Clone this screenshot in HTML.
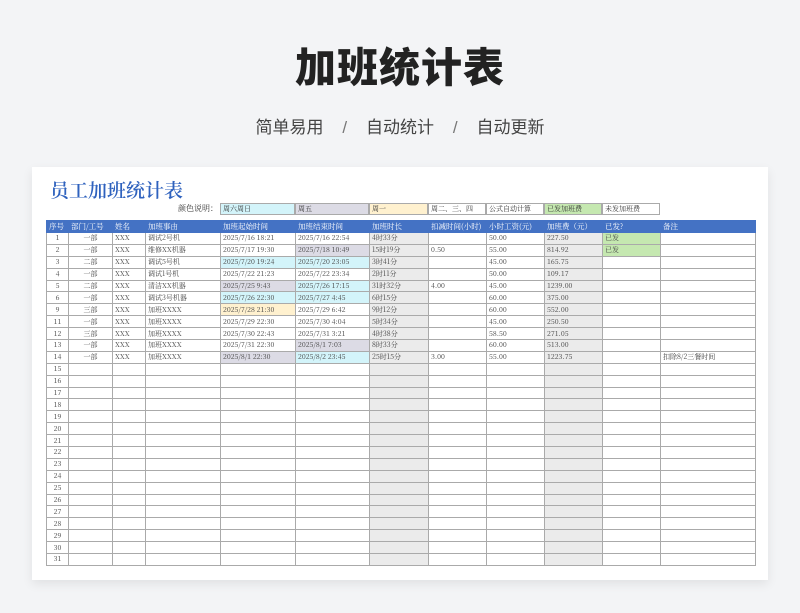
<!DOCTYPE html>
<html><head><meta charset="utf-8"><style>
*{margin:0;padding:0;box-sizing:border-box}
body{width:800px;height:613px;background:#f3f4f6;font-family:"Liberation Sans","Noto Sans CJK SC",sans-serif;position:relative;overflow:hidden}
.t{position:absolute;left:0;width:800px;text-align:center;top:34px;font-size:41px;font-weight:900;color:#222;letter-spacing:1px}
.s{position:absolute;left:0;width:800px;text-align:center;top:113px;font-size:17px;color:#444}
.s span{color:#777;font-weight:300}
.card{position:absolute;left:32px;top:167px;width:736px;height:413px;background:#fff;box-shadow:0 4px 10px rgba(0,0,0,.08)}
.h{position:absolute;left:50px;top:176px;font-family:"Noto Serif CJK SC",serif;font-size:19px;color:#2f62be;font-weight:600}
.lg{position:absolute;top:203px;height:12px;font-family:"Noto Serif CJK SC",serif;font-size:7px;line-height:11px;padding-left:2px;border:1px solid #aaa;color:#333}
table{position:absolute;left:46px;top:220px;border-collapse:collapse;table-layout:fixed;font-family:"Noto Serif CJK SC",serif;font-size:7px;color:#444}
td{border:1px solid #aaa;height:11.9px;padding:0 2px;white-space:nowrap;overflow:hidden;line-height:10px}
tr.hd td{background:#4472c4;color:#fff;height:12px;border-color:#4472c4;font-size:7.5px}
td.c{text-align:center}
.g{background:#ebebeb}.cy{background:#d3f4fa}.lv{background:#dcdbe5}.cr{background:#fff1cf}.gr{background:#c5e8b0}
</style></head><body>
<div class="t">加班统计表</div>
<div class="s">简单易用 &nbsp;&nbsp;&nbsp;<span>/</span> &nbsp;&nbsp;&nbsp;自动统计 &nbsp;&nbsp;&nbsp;<span>/</span> &nbsp;&nbsp;&nbsp;自动更新</div>
<div class="card"></div>
<div class="h">员工加班统计表</div>
<div class="lg" style="left:140px;width:80px;border:none;text-align:right;padding-right:2px;font-size:8px">颜色说明：</div>
<div class="lg cy" style="left:220px;width:75px">周六周日</div>
<div class="lg lv" style="left:295px;width:74px">周五</div>
<div class="lg cr" style="left:369px;width:59px">周一</div>
<div class="lg" style="left:428px;width:58px">周二、三、四</div>
<div class="lg" style="left:486px;width:58px">公式自动计算</div>
<div class="lg gr" style="left:544px;width:58px">已发加班费</div>
<div class="lg" style="left:602px;width:58px">未发加班费</div>
<table>
<colgroup><col style="width:22px"><col style="width:44px"><col style="width:33px"><col style="width:75px"><col style="width:75px"><col style="width:74px"><col style="width:59px"><col style="width:58px"><col style="width:58px"><col style="width:58px"><col style="width:58px"><col style="width:95px"></colgroup>
<tr class="hd"><td>序号</td><td>部门/工号</td><td>姓名</td><td>加班事由</td><td>加班起始时间</td><td>加班结束时间</td><td>加班时长</td><td>扣减时间(小时)</td><td>小时工资(元)</td><td>加班费（元）</td><td>已发?</td><td>备注</td></tr>
<tr><td class="c">1</td><td class="c">一部</td><td>XXX</td><td>调试2号机</td><td>2025/7/16 18:21</td><td>2025/7/16 22:54</td><td class="g">4时33分</td><td></td><td>50.00</td><td class="g">227.50</td><td class="gr">已发</td><td></td></tr>
<tr><td class="c">2</td><td class="c">一部</td><td>XXX</td><td>维修XX机器</td><td>2025/7/17 19:30</td><td class="lv">2025/7/18 10:49</td><td class="g">15时19分</td><td>0.50</td><td>55.00</td><td class="g">814.92</td><td class="gr">已发</td><td></td></tr>
<tr><td class="c">3</td><td class="c">二部</td><td>XXX</td><td>调试5号机</td><td class="cy">2025/7/20 19:24</td><td class="cy">2025/7/20 23:05</td><td class="g">3时41分</td><td></td><td>45.00</td><td class="g">165.75</td><td></td><td></td></tr>
<tr><td class="c">4</td><td class="c">一部</td><td>XXX</td><td>调试1号机</td><td>2025/7/22 21:23</td><td>2025/7/22 23:34</td><td class="g">2时11分</td><td></td><td>50.00</td><td class="g">109.17</td><td></td><td></td></tr>
<tr><td class="c">5</td><td class="c">二部</td><td>XXX</td><td>清洁XX机器</td><td class="lv">2025/7/25 9:43</td><td class="cy">2025/7/26 17:15</td><td class="g">31时32分</td><td>4.00</td><td>45.00</td><td class="g">1239.00</td><td></td><td></td></tr>
<tr><td class="c">6</td><td class="c">一部</td><td>XXX</td><td>调试3号机器</td><td class="cy">2025/7/26 22:30</td><td class="cy">2025/7/27 4:45</td><td class="g">6时15分</td><td></td><td>60.00</td><td class="g">375.00</td><td></td><td></td></tr>
<tr><td class="c">9</td><td class="c">三部</td><td>XXX</td><td>加班XXXX</td><td class="cr">2025/7/28 21:30</td><td>2025/7/29 6:42</td><td class="g">9时12分</td><td></td><td>60.00</td><td class="g">552.00</td><td></td><td></td></tr>
<tr><td class="c">11</td><td class="c">一部</td><td>XXX</td><td>加班XXXX</td><td>2025/7/29 22:30</td><td>2025/7/30 4:04</td><td class="g">5时34分</td><td></td><td>45.00</td><td class="g">250.50</td><td></td><td></td></tr>
<tr><td class="c">12</td><td class="c">三部</td><td>XXX</td><td>加班XXXX</td><td>2025/7/30 22:43</td><td>2025/7/31 3:21</td><td class="g">4时38分</td><td></td><td>58.50</td><td class="g">271.05</td><td></td><td></td></tr>
<tr><td class="c">13</td><td class="c">一部</td><td>XXX</td><td>加班XXXX</td><td>2025/7/31 22:30</td><td class="lv">2025/8/1 7:03</td><td class="g">8时33分</td><td></td><td>60.00</td><td class="g">513.00</td><td></td><td></td></tr>
<tr><td class="c">14</td><td class="c">一部</td><td>XXX</td><td>加班XXXX</td><td class="lv">2025/8/1 22:30</td><td class="cy">2025/8/2 23:45</td><td class="g">25时15分</td><td>3.00</td><td>55.00</td><td class="g">1223.75</td><td></td><td>扣除8/2三餐时间</td></tr>
<tr><td class="c">15</td><td></td><td></td><td></td><td></td><td></td><td class="g"></td><td></td><td></td><td class="g"></td><td></td><td></td></tr>
<tr><td class="c">16</td><td></td><td></td><td></td><td></td><td></td><td class="g"></td><td></td><td></td><td class="g"></td><td></td><td></td></tr>
<tr><td class="c">17</td><td></td><td></td><td></td><td></td><td></td><td class="g"></td><td></td><td></td><td class="g"></td><td></td><td></td></tr>
<tr><td class="c">18</td><td></td><td></td><td></td><td></td><td></td><td class="g"></td><td></td><td></td><td class="g"></td><td></td><td></td></tr>
<tr><td class="c">19</td><td></td><td></td><td></td><td></td><td></td><td class="g"></td><td></td><td></td><td class="g"></td><td></td><td></td></tr>
<tr><td class="c">20</td><td></td><td></td><td></td><td></td><td></td><td class="g"></td><td></td><td></td><td class="g"></td><td></td><td></td></tr>
<tr><td class="c">21</td><td></td><td></td><td></td><td></td><td></td><td class="g"></td><td></td><td></td><td class="g"></td><td></td><td></td></tr>
<tr><td class="c">22</td><td></td><td></td><td></td><td></td><td></td><td class="g"></td><td></td><td></td><td class="g"></td><td></td><td></td></tr>
<tr><td class="c">23</td><td></td><td></td><td></td><td></td><td></td><td class="g"></td><td></td><td></td><td class="g"></td><td></td><td></td></tr>
<tr><td class="c">24</td><td></td><td></td><td></td><td></td><td></td><td class="g"></td><td></td><td></td><td class="g"></td><td></td><td></td></tr>
<tr><td class="c">25</td><td></td><td></td><td></td><td></td><td></td><td class="g"></td><td></td><td></td><td class="g"></td><td></td><td></td></tr>
<tr><td class="c">26</td><td></td><td></td><td></td><td></td><td></td><td class="g"></td><td></td><td></td><td class="g"></td><td></td><td></td></tr>
<tr><td class="c">27</td><td></td><td></td><td></td><td></td><td></td><td class="g"></td><td></td><td></td><td class="g"></td><td></td><td></td></tr>
<tr><td class="c">28</td><td></td><td></td><td></td><td></td><td></td><td class="g"></td><td></td><td></td><td class="g"></td><td></td><td></td></tr>
<tr><td class="c">29</td><td></td><td></td><td></td><td></td><td></td><td class="g"></td><td></td><td></td><td class="g"></td><td></td><td></td></tr>
<tr><td class="c">30</td><td></td><td></td><td></td><td></td><td></td><td class="g"></td><td></td><td></td><td class="g"></td><td></td><td></td></tr>
<tr><td class="c">31</td><td></td><td></td><td></td><td></td><td></td><td class="g"></td><td></td><td></td><td class="g"></td><td></td><td></td></tr>
</table>
</body></html>
